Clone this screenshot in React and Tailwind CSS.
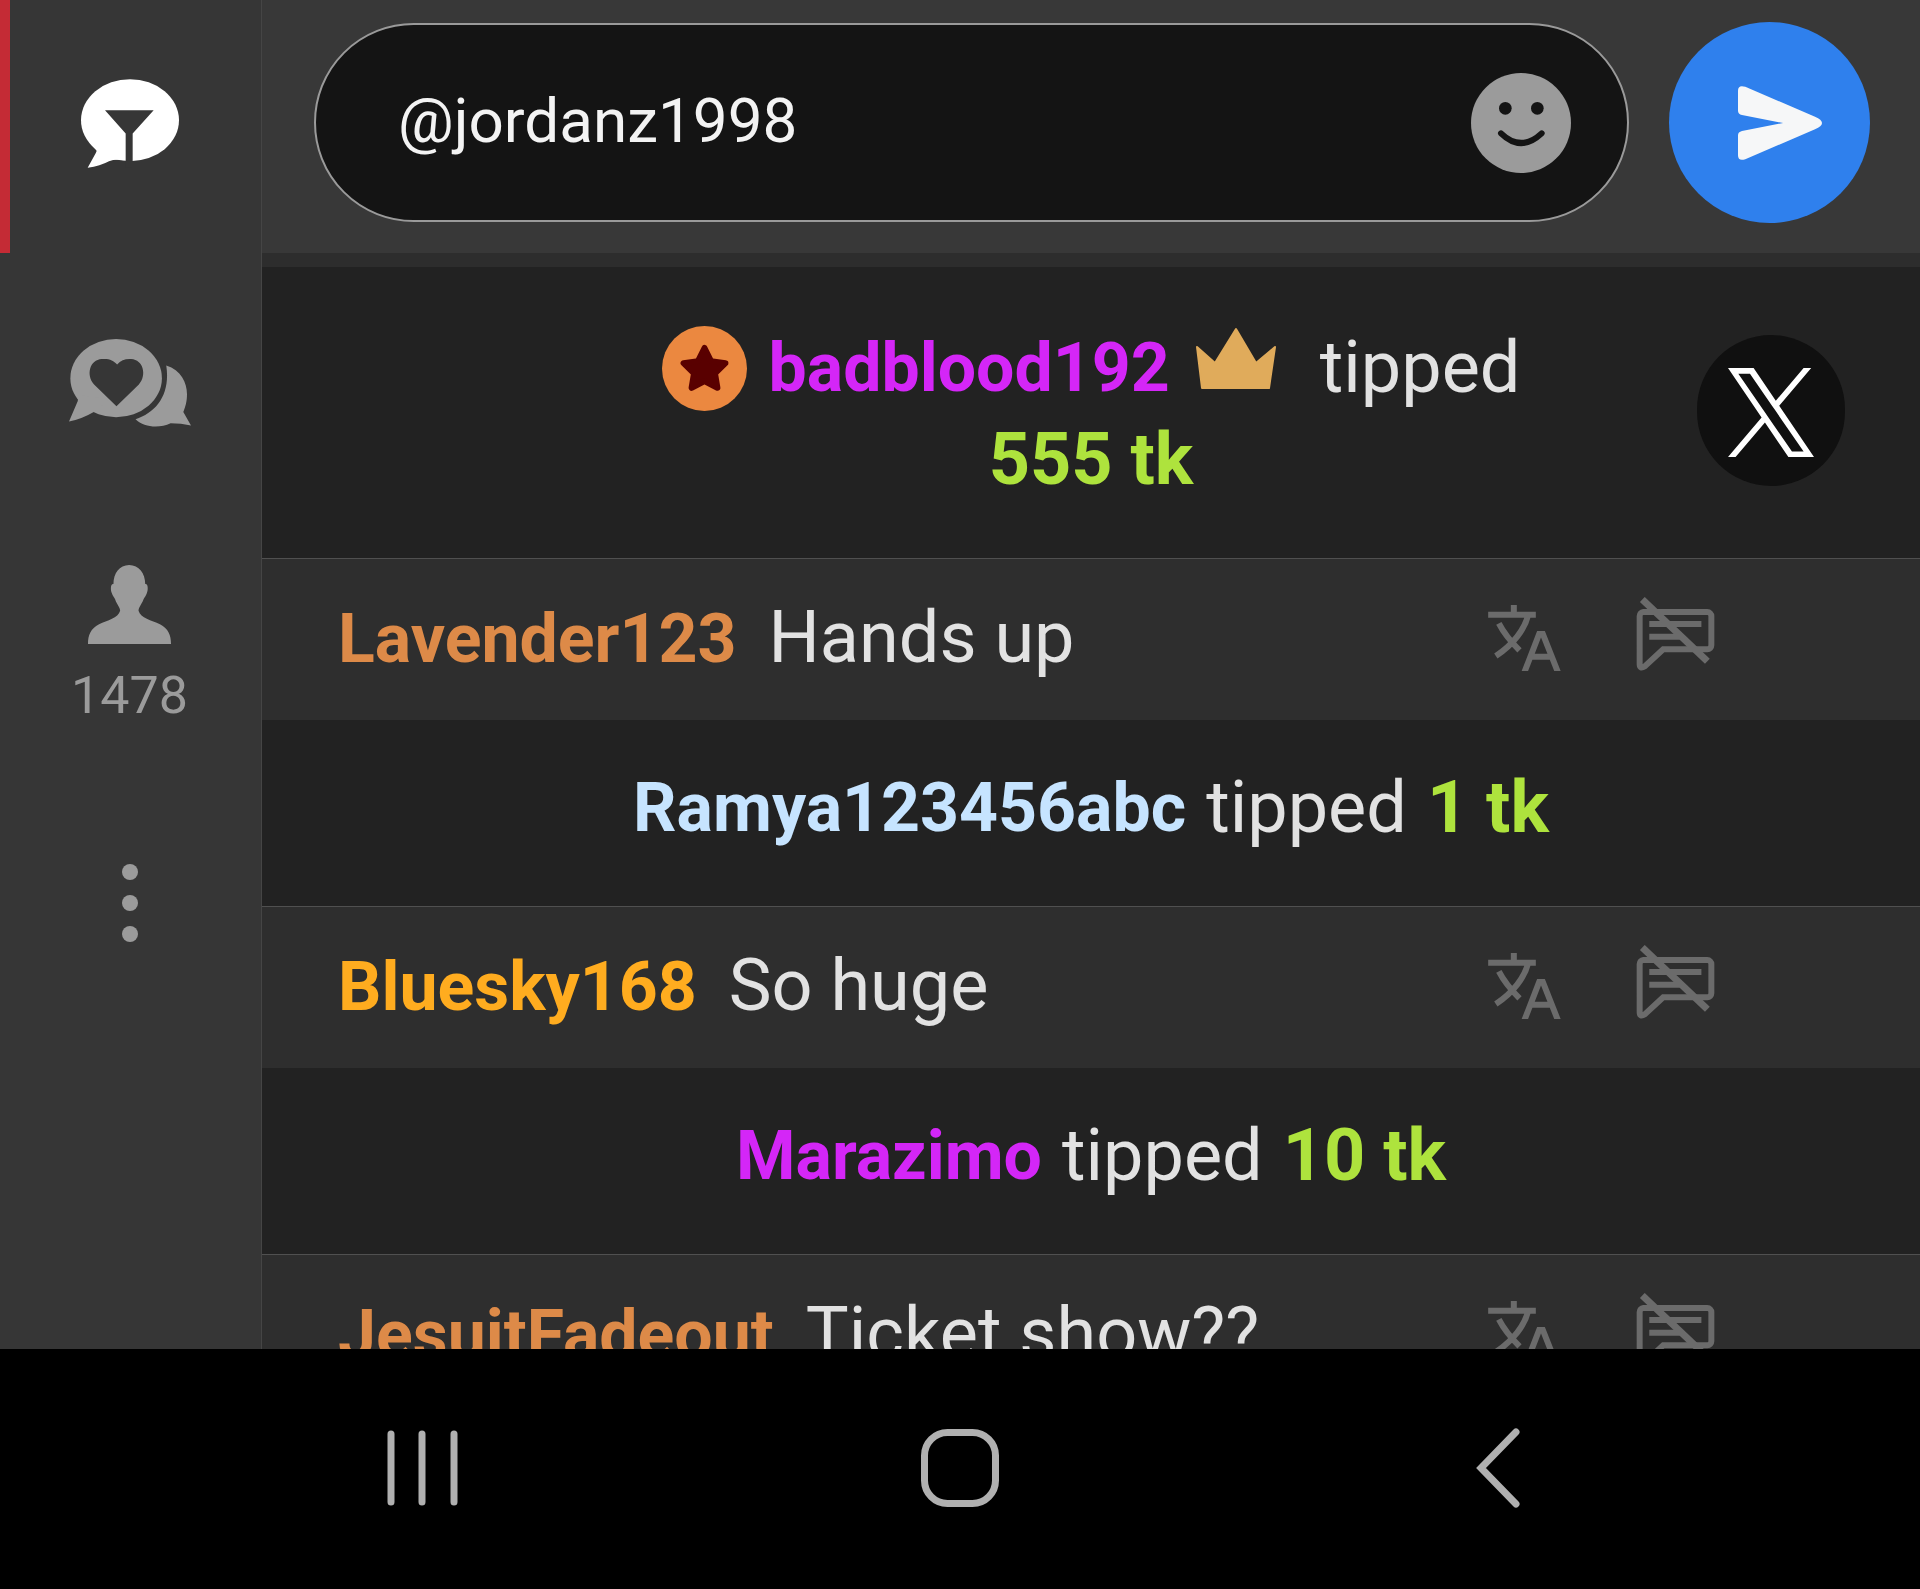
const entries = [
  {
    kind: 'tip',
    name: 'badblood192',
    color: 'text-[#d426f7]',
    amount: '555 tk',
    ranked: true,
    pad: 'pt-[55px] pb-[52px]',
  },
  { kind: 'chat', name: 'Lavender123', color: 'text-[#dd8a48]', text: 'Hands up' },
  { kind: 'tip', name: 'Ramya123456abc', color: 'text-[#c6e4ff]', amount: '1 tk', pad: 'pt-[42px] pb-[52px]' },
  { kind: 'chat', name: 'Bluesky168', color: 'text-[#ffac1f]', text: 'So huge' },
  { kind: 'tip', name: 'Marazimo', color: 'text-[#d426f7]', amount: '10 tk', pad: 'pt-[42px] pb-[52px]' },
  { kind: 'chat', name: 'JesuitFadeout', color: 'text-[#dd8a48]', text: 'Ticket show??' },
]

function FilterChatIcon() {
  return (
    <svg viewBox="0 0 294 266" className="w-[98px] h-[89px]" aria-hidden="true">
      <ellipse cx="147" cy="123" rx="147" ry="123" fill="#fff" />
      <path d="M36 200Q52 214 44 222L20 266Q58 260 84 246Q100 240 130 243L150 190Z" fill="#fff" />
      <path d="M72 93H218L155 163V266H134V163Z" fill="#363636" />
    </svg>
  )
}

function PrivateChatIcon() {
  return (
    <svg viewBox="0 0 365 263" className="w-[122px] h-[88px]" fill="#9b9b9b" aria-hidden="true">
      <ellipse cx="141" cy="117" rx="137" ry="117" />
      <path d="M18 165Q30 176 26 186L0 247Q40 238 74 218L120 180Z" />
      <path
        d="M142 201L75 136C50 108 62 62 98 60C120 58 133 64 144 76C155 64 168 59 186 60C222 62 234 108 209 136Z"
        fill="#363636"
      />
      <path d="M291 79C335 93 353 130 353 165C353 188 348 202 342 218L365 259Q335 252 304 252C270 268 225 265 199 240C262 220 304 165 291 79Z" />
    </svg>
  )
}

function UserIcon() {
  return (
    <svg viewBox="0 0 248 236" className="w-[83px] h-[79px]" fill="#9b9b9b" aria-hidden="true">
      <path d="M123 0C152 0 171 25 171 57C180 55 180 75 176 84C173 93 168 98 166 102C160 118 151 126 151 137C157 160 190 165 215 177C240 190 248 210 248 236H0C0 210 8 190 33 177C58 165 90 160 96 137C96 126 86 118 81 102C78 97 74 93 71 84C67 75 67 55 76 57C76 25 94 0 123 0Z" />
    </svg>
  )
}

function DotsIcon() {
  return (
    <svg viewBox="0 0 16 78" className="w-4 h-[78px]" fill="#9b9b9b" aria-hidden="true">
      <circle cx="8" cy="8" r="8" />
      <circle cx="8" cy="39" r="8" />
      <circle cx="8" cy="70" r="8" />
    </svg>
  )
}

function SmileIcon() {
  return (
    <svg viewBox="0 0 300 300" className="w-[100px] h-[100px]" aria-hidden="true">
      <circle cx="150" cy="150" r="150" fill="#9b9b9b" />
      <circle cx="103" cy="106" r="19" fill="#141414" />
      <circle cx="199" cy="106" r="19" fill="#141414" />
      <path d="M90 181Q150 239 212 181" fill="none" stroke="#141414" strokeWidth="18" strokeLinecap="round" />
    </svg>
  )
}

function SendIcon() {
  return (
    <svg viewBox="0 0 253 222" className="w-[84px] h-[74px]" aria-hidden="true">
      <path
        d="M22 2L232 92Q253 101 253 111Q253 121 232 130L22 220Q0 227 0 208V148Q0 138 12 135L136 111L12 87Q0 84 0 74V14Q0 -5 22 2Z"
        fill="#f6f7f8"
      />
    </svg>
  )
}

function RankBadge() {
  return (
    <svg viewBox="0 0 85 85" className="w-[85px] h-[85px] mr-0.5" aria-hidden="true">
      <circle cx="42.5" cy="42.5" r="42.5" fill="#eb8840" />
      <path
        d="M42.5 22L49 35.1L63.4 37.2L53 47.4L55.4 61.8L42.5 55L29.6 61.8L32 47.4L21.6 37.2L36 35.1Z"
        fill="#590000"
        stroke="#590000"
        strokeWidth="6"
        strokeLinejoin="round"
      />
    </svg>
  )
}

function CrownIcon() {
  return (
    <svg viewBox="0 0 80 92" className="w-20 h-[92px] ml-1.5 mr-6" aria-hidden="true">
      <path
        d="M1 25L19 41L40 7L60 41L79 25L73 66H6Z"
        fill="#e0ab5b"
        stroke="#e0ab5b"
        strokeWidth="2"
        strokeLinejoin="round"
      />
    </svg>
  )
}

function TranslateIcon() {
  return (
    <svg viewBox="0 0 218 198" className="w-[73px] h-[66px]" fill="none" stroke="#6b6b6b" strokeWidth="18" aria-hidden="true">
      <path d="M77 0V30M0 29H143M120 30C110 72 76 118 23 153M32 55C46 82 66 108 94 136" />
      <path d="M107 206L153 87H164L211 206M126 155H190" />
    </svg>
  )
}

function MuteChatIcon() {
  return (
    <svg viewBox="0 0 238 222" className="w-[79px] h-[74px]" fill="none" stroke="#6b6b6b" strokeWidth="18" aria-hidden="true">
      <path d="M22 45H215A12 12 0 0 1 227 57V145A12 12 0 0 1 215 157H82L27 208Q11 218 11 202V57A12 12 0 0 1 22 45Z" />
      <path d="M40 81H197M40 119H132" />
      <path d="M19 7L215 193" strokeWidth="21" />
    </svg>
  )
}

function XLogo() {
  return (
    <svg viewBox="1 1 22 22" className="w-[86px] h-[89px]" preserveAspectRatio="none" fill="#fff" aria-hidden="true">
      <path
        fillRule="evenodd"
        d="M14.0955 10.3165L22.2864 1H20.3456L13.2303 9.0877L7.5514 1H1L9.5895 13.2311L1 23H2.9407L10.4501 14.4571L16.4486 23H23L14.0955 10.3165ZM11.4365 13.3385L10.5649 12.1198L3.6406 2.4316H6.6219L12.2117 10.2532L13.0796 11.4719L20.3447 21.6381H17.3634L11.4365 13.3385Z"
      />
    </svg>
  )
}

function Sidebar({ viewers }) {
  return (
    <aside className="w-[262px] shrink-0 flex flex-col bg-[#363636] border-r border-[#454545]">
      <button aria-label="Chat" className="h-[253px] shrink-0 border-l-[10px] border-[#c42b35] pr-3 pb-1.5 grid place-items-center">
        <FilterChatIcon />
      </button>
      <div className="pt-[86px] pr-0.5 flex flex-col items-center gap-[138px]">
        <button aria-label="Private messages">
          <PrivateChatIcon />
        </button>
        <button className="flex flex-col items-center gap-[22px] text-[52px] leading-[60px] text-[#9b9b9b]">
          <UserIcon />
          {viewers}
        </button>
        <button aria-label="More">
          <DotsIcon />
        </button>
      </div>
    </aside>
  )
}

function MessageBar() {
  return (
    <form
      className="flex items-center gap-10 h-[267px] shrink-0 pl-[52px] pr-[50px] pb-2 bg-[#383838] border-b-[14px] border-[#2d2d2d]"
      onSubmit={(e) => e.preventDefault()}
    >
      <div className="flex-1 min-w-0 flex items-center h-[199px] rounded-full border-2 border-[#9a9a9a] bg-[#141414] pl-[82px] pr-14">
        <input
          aria-label="Message"
          defaultValue="@jordanz1998"
          className="flex-1 min-w-0 bg-transparent outline-none text-[62px] leading-[72px] text-[#f3f3f3] pb-1"
        />
        <button type="button" aria-label="Emoji">
          <SmileIcon />
        </button>
      </div>
      <button aria-label="Send" className="w-[201px] h-[201px] shrink-0 rounded-full bg-[#2f80ed] grid place-items-center pl-5">
        <SendIcon />
      </button>
    </form>
  )
}

function Tip({ name, color, amount, ranked, pad }) {
  return (
    <li className={`flex flex-wrap items-center justify-center gap-x-5 px-80 bg-[#222222] border-b border-[#505050] text-[72px] leading-[92px] ${pad}`}>
      {ranked && <RankBadge />}
      <b className={`text-[68px] ${color}`}>{name}</b>
      {ranked && <CrownIcon />}
      <span>tipped</span>
      <b className="text-[#aee33d] whitespace-nowrap">{amount}</b>
    </li>
  )
}

function ChatLine({ name, color, text }) {
  return (
    <li className="flex items-center justify-between pl-[76px] pr-[205px] pt-[33px] pb-9 bg-[#2e2e2e] text-[72px] leading-[92px]">
      <p className="flex items-baseline gap-8 h-[92px]">
        <b className={`text-[68px] ${color}`}>{name}</b>
        <span>{text}</span>
      </p>
      <div className="flex items-center gap-[75px]">
        <button aria-label="Translate">
          <TranslateIcon />
        </button>
        <button aria-label="Mute user" className="pb-2">
          <MuteChatIcon />
        </button>
      </div>
    </li>
  )
}

function SystemNav() {
  return (
    <nav className="h-[240px] shrink-0 grid grid-cols-3 items-center justify-items-center px-[153px] pb-0.5 bg-black">
      <button aria-label="Recent apps">
        <svg viewBox="0 0 72 80" className="w-[72px] h-20" stroke="#b0b0b0" strokeWidth="7" strokeLinecap="round" aria-hidden="true">
          <path d="M5 6V74M36 6V74M68 6V74" />
        </svg>
      </button>
      <button aria-label="Home">
        <svg viewBox="0 0 80 80" className="w-20 h-20" fill="none" stroke="#b0b0b0" strokeWidth="7" aria-hidden="true">
          <rect x="4.5" y="4.5" width="71" height="71" rx="23" />
        </svg>
      </button>
      <button aria-label="Back">
        <svg viewBox="0 0 44 80" className="w-11 h-20" fill="none" stroke="#b0b0b0" strokeWidth="7" strokeLinecap="round" aria-hidden="true">
          <path d="M40 4L5 40L40 76" />
        </svg>
      </button>
    </nav>
  )
}

export default function App() {
  return (
    <div className="h-screen flex flex-col bg-black text-[#e2e2e2] font-['Roboto',sans-serif]">
      <div className="flex-1 min-h-0 flex overflow-hidden">
        <Sidebar viewers={1478} />
        <main className="flex-1 min-w-0 flex flex-col">
          <MessageBar />
          <div className="relative flex-1 min-h-0 bg-[#2e2e2e] overflow-hidden">
            <ul>
              {entries.map((entry) =>
                entry.kind === 'tip' ? <Tip key={entry.name} {...entry} /> : <ChatLine key={entry.name} {...entry} />
              )}
            </ul>
            <a
              href="#"
              aria-label="X"
              className="absolute top-[68px] right-[75px] w-[148px] h-[151px] rounded-full bg-[#101010] grid place-items-center pt-1"
            >
              <XLogo />
            </a>
          </div>
        </main>
      </div>
      <SystemNav />
    </div>
  )
}
